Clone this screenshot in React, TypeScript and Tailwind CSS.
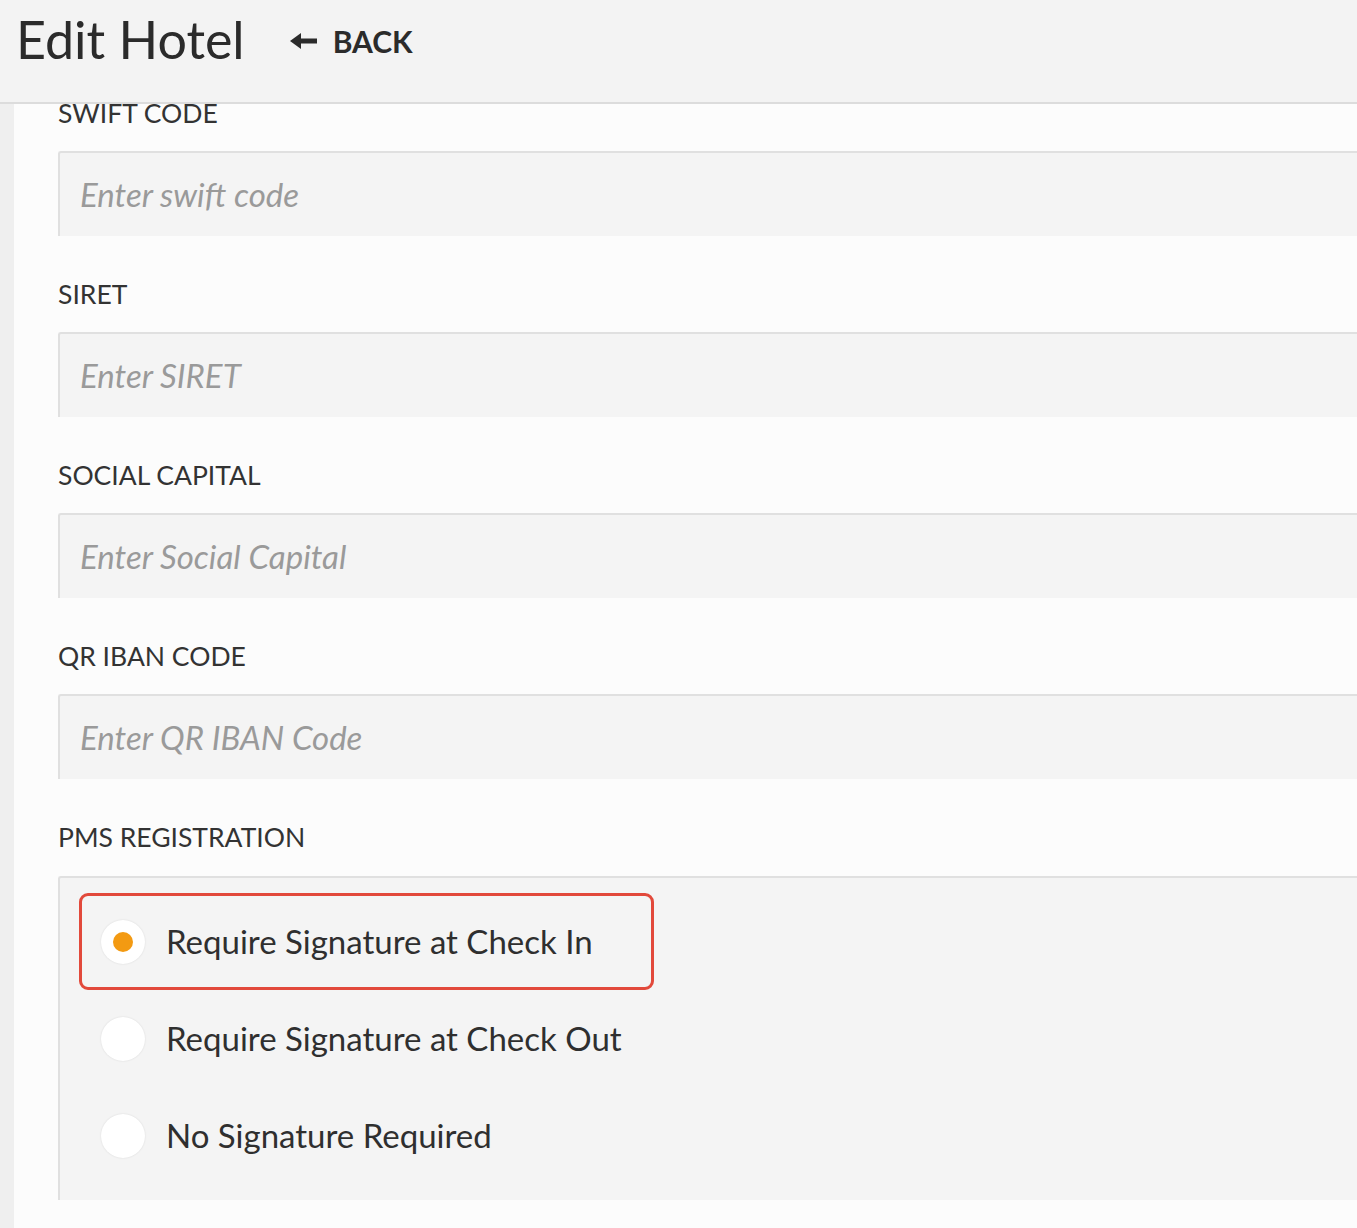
import React, { useState } from 'react';

const fields = [
  { label: 'SWIFT CODE', placeholder: 'Enter swift code' },
  { label: 'SIRET', placeholder: 'Enter SIRET' },
  { label: 'SOCIAL CAPITAL', placeholder: 'Enter Social Capital' },
  { label: 'QR IBAN CODE', placeholder: 'Enter QR IBAN Code' },
];

const options = [
  'Require Signature at Check In',
  'Require Signature at Check Out',
  'No Signature Required',
];

const App: React.FC = () => {
  const [selected, setSelected] = useState(0);

  return (
    <div className="h-[1228px] flex flex-col bg-[#f2f2f2] text-[#333] font-['Lato','Liberation_Sans',sans-serif] overflow-hidden">
      {/* Header */}
      <div className="h-[104px] shrink-0 flex items-center px-[16px] pb-[24px] border-b-2 border-[#dcdcdc] bg-[#f3f3f3]">
        <h1 className="text-[52px] leading-none text-[#2b2b2b]">Edit Hotel</h1>
        <button className="ml-[45px] mt-[4px] flex items-center gap-[16px] text-[#2b2b2b]">
          <svg width="27" height="16" viewBox="0 0 27 16">
            <polygon points="0,8 11,0 11,16" fill="#2b2b2b" />
            <rect x="9" y="5.5" width="18" height="5" fill="#2b2b2b" />
          </svg>
          <span className="text-[30px] font-bold leading-none">BACK</span>
        </button>
      </div>

      <div className="flex flex-1 min-h-0">
        <div className="w-[14px] shrink-0 bg-[#efefef]" />
        <div className="flex-1 bg-[#fcfcfc] pl-[44px] overflow-hidden">
          <div className="-mt-[49px]">
            {fields.map((f) => (
              <div key={f.label} className="pt-[41px]">
                <label className="block text-[26.5px] leading-[34px] text-[#333]">{f.label}</label>
                <div className="mt-[21px] h-[85px] flex items-center bg-[#f4f4f4] border-t-2 border-l-2 border-[#e0e0e0] rounded-tl-[3px] px-[20px]">
                  <span className="italic text-[33px] text-[#9a9a9a]">{f.placeholder}</span>
                </div>
              </div>
            ))}

            <div className="pt-[41px]">
              <label className="block text-[26.5px] leading-[34px] text-[#333]">PMS REGISTRATION</label>
              <div className="mt-[22px] h-[324px] bg-[#f4f4f4] border-t-2 border-l-2 border-[#e0e0e0] rounded-tl-[3px] pt-[15px] pl-[19px]">
                {options.map((o, i) => (
                  <div
                    key={o}
                    onClick={() => setSelected(i)}
                    className={`w-[575px] h-[97px] flex items-center pl-[19px] rounded-[9px] border-[3px] cursor-pointer ${
                      selected === i ? 'border-[#e2493b]' : 'border-transparent'
                    }`}
                  >
                    <span className="w-[44px] h-[44px] shrink-0 rounded-full bg-white shadow-[0_0_2px_rgba(0,0,0,0.12)] flex items-center justify-center">
                      {selected === i && <span className="w-[20px] h-[20px] rounded-full bg-[#f39a12]" />}
                    </span>
                    <span className="ml-[21px] text-[33px] text-[#2f2f2f] whitespace-nowrap">{o}</span>
                  </div>
                ))}
              </div>
            </div>
          </div>
        </div>
      </div>
    </div>
  );
};

export default App;
